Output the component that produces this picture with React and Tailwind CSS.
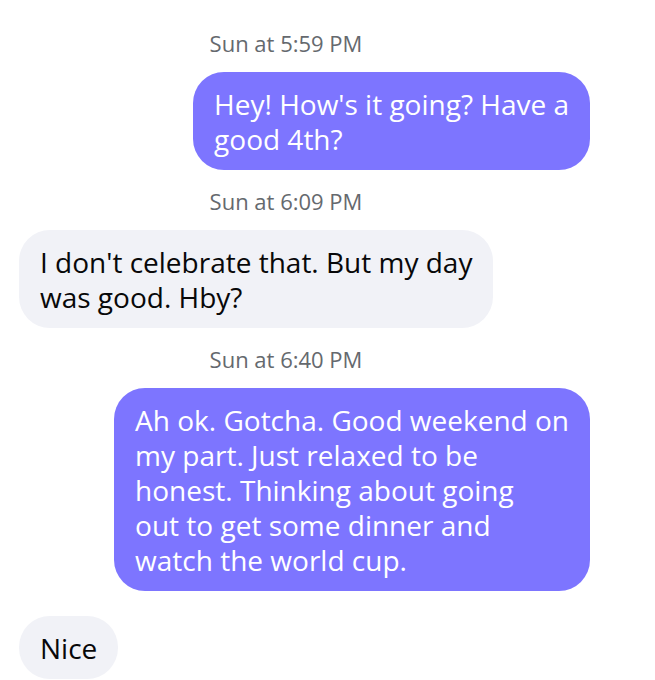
const messages = [
  { id: 1, time: "Sun at 5:59 PM", mine: true, lines: ["Hey! How's it going? Have a", "good 4th?"] },
  { id: 2, time: "Sun at 6:09 PM", mine: false, lines: ["I don't celebrate that. But my day", "was good. Hby?"] },
  {
    id: 3,
    time: "Sun at 6:40 PM",
    mine: true,
    lines: [
      "Ah ok. Gotcha. Good weekend on",
      "my part. Just relaxed to be",
      "honest. Thinking about going",
      "out to get some dinner and",
      "watch the world cup.",
    ],
  },
  { id: 4, mine: false, lines: ["Nice"] },
];

function Timestamp({ children }) {
  return (
    <time className="mb-[7px] block pr-[37px] text-center text-[22px] leading-[28px] text-[#65696e]">
      {children}
    </time>
  );
}

function Bubble({ mine, lines }) {
  const tone = mine ? "self-end bg-[#7d75ff] text-white" : "self-start bg-[#f1f2f7] text-[#080809]";
  return (
    <p className={`rounded-[31px] px-[21px] pt-[15px] pb-[13px] text-[28px] leading-[35px] ${tone}`}>
      {lines.map((line) => (
        <span key={line} className="block whitespace-nowrap">
          {line}
        </span>
      ))}
    </p>
  );
}

export default function App() {
  return (
    <main className="min-h-screen bg-white pt-[29px] pr-[65px] pl-[19px] font-['Open_Sans',sans-serif]">
      <ol className="flex flex-col gap-[17px]">
        {messages.map((message) => (
          <li key={message.id} className="flex flex-col">
            {message.time && <Timestamp>{message.time}</Timestamp>}
            <div className="flex flex-col pt-[8px]">
              <Bubble mine={message.mine} lines={message.lines} />
            </div>
          </li>
        ))}
      </ol>
    </main>
  );
}
